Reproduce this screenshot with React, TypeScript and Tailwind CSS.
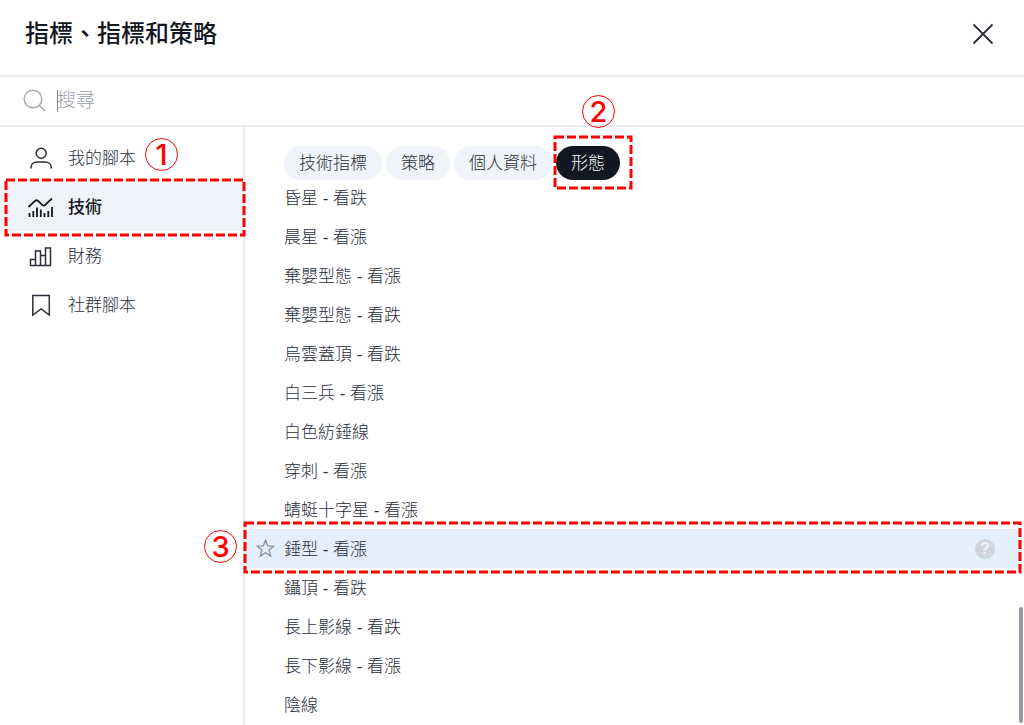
import { useState } from 'react';
import type { JSX } from 'react';
import { clsx } from 'clsx';

type CategoryId = 'mine' | 'technical' | 'financial' | 'community';

const categories: { id: CategoryId; label: string; icon: JSX.Element }[] = [
  { id: 'mine', label: '我的腳本', icon: <PersonIcon /> },
  { id: 'technical', label: '技術', icon: <TechnicalIcon /> },
  { id: 'financial', label: '財務', icon: <BarsIcon /> },
  { id: 'community', label: '社群腳本', icon: <BookmarkIcon /> }
];

const tabs = ['技術指標', '策略', '個人資料', '形態'];

const patterns = [
  '昏星 - 看跌',
  '晨星 - 看漲',
  '棄嬰型態 - 看漲',
  '棄嬰型態 - 看跌',
  '烏雲蓋頂 - 看跌',
  '白三兵 - 看漲',
  '白色紡錘線',
  '穿刺 - 看漲',
  '蜻蜓十字星 - 看漲',
  '錘型 - 看漲',
  '鑷頂 - 看跌',
  '長上影線 - 看跌',
  '長下影線 - 看漲',
  '陰線'
];

const highlightedPattern = '錘型 - 看漲';

export default function App() {
  const [category, setCategory] = useState<CategoryId>('technical');
  const [tab, setTab] = useState('形態');
  const [query, setQuery] = useState('');

  return (
    <div className="flex min-h-screen flex-col overflow-hidden bg-white font-['Liberation_Sans','Noto_Sans_CJK_TC',sans-serif] text-[17px] text-[#2a2e39]">
      <header className="flex h-[75px] items-center justify-between pr-7 pb-2 pl-[25px]">
        <h1 className="text-2xl font-medium text-[#131722]">指標、指標和策略</h1>
        <button type="button" aria-label="關閉" className="text-[#2a2e39]">
          <svg className="h-[26px] w-[26px]" viewBox="0 0 26 26" fill="none" stroke="currentColor" strokeWidth="1.8">
            <path d="M3.5 3.5l19 19M22.5 3.5l-19 19" />
          </svg>
        </button>
      </header>

      <label className="flex h-[52px] items-center gap-[10px] border-y-2 border-[#e9eaf1] px-[23px]">
        <svg className="h-6 w-6 shrink-0 text-[#a9abb5]" viewBox="0 0 24 24" fill="none" stroke="currentColor" strokeWidth="1.5">
          <circle cx="10" cy="10" r="8.8" />
          <path d="M16.3 16.3l6 6" />
        </svg>
        <span className="h-[22px] w-px bg-[#8d909b]" />
        <input
          type="text"
          aria-label="搜尋"
          placeholder="搜尋"
          value={query}
          onChange={(event) => setQuery(event.target.value)}
          className="-ml-[11px] min-w-0 flex-1 text-[19px] font-light outline-none placeholder:text-[#9a9daa]"
        />
      </label>

      <div className="flex flex-1">
        <nav className="w-[245px] shrink-0 border-r-2 border-[#e9eaf1] pt-1.5">
          {categories.map((item) => (
            <button
              key={item.id}
              type="button"
              onClick={() => setCategory(item.id)}
              className={clsx(
                'relative flex h-[49px] w-full items-center gap-[14px] pl-[27px]',
                item.id === category ? 'bg-[#f0f3fa] font-medium text-[#131722]' : 'font-light'
              )}
            >
              {item.icon}
              <span className="pt-[3px]">{item.label}</span>
              {item.id === 'mine' && <StepNumber value={1} className="top-[5px] left-[145px]" />}
              {item.id === 'technical' && <DashedFrame className="-top-[3px] -right-0.5 -bottom-[5px] left-[5px]" />}
            </button>
          ))}
        </nav>

        <main className="relative min-w-0 flex-1">
          <div className="flex gap-1 pt-[19px] pl-[39px]">
            {tabs.map((name) => (
              <button
                key={name}
                type="button"
                onClick={() => setTab(name)}
                className={clsx(
                  'relative h-[34px] rounded-full px-[15px] pt-0.5 font-light',
                  name === tab ? 'bg-[#131722] text-white' : 'bg-[#f0f3fa]'
                )}
              >
                {name}
                {name === '形態' && (
                  <>
                    <StepNumber value={2} className="-top-[51px] left-[26px]" />
                    <DashedFrame className="-top-[10px] -right-3 -bottom-[9px] -left-0.5" />
                  </>
                )}
              </button>
            ))}
          </div>

          <ul className="-mt-0.5 font-light">
            {patterns.map((name) => (
              <PatternRow key={name} name={name} highlighted={name === highlightedPattern} />
            ))}
          </ul>

          <div className="absolute right-px bottom-0.5 h-[116px] w-1 rounded-full bg-[#9598a1]" />
        </main>
      </div>
    </div>
  );
}

function PatternRow({ name, highlighted }: { name: string; highlighted: boolean }) {
  if (!highlighted) {
    return <li className="flex h-[39px] items-center pt-[3px] pl-[39px]">{name}</li>;
  }

  return (
    <li className="relative mr-[5px] flex h-[39px] items-center bg-[#e3effd] pr-6 pl-[11px]">
      <button type="button" aria-label="加入收藏" className="mr-[9px] text-[#8b8e99]">
        <svg className="h-[19px] w-[19px]" viewBox="0 0 19 19" fill="none" stroke="currentColor" strokeWidth="1.3">
          <path d="M9.5 1.2l2.2 5.6 6 .4-4.6 3.900 1.500 5.900-5.100-3.200-5.100 3.200 1.500-5.900L1.300 7.200l6-.4z" />
        </svg>
      </button>
      <span className="flex-1 pt-[3px]">{name}</span>
      <button
        type="button"
        aria-label="說明"
        className="h-5 w-5 rounded-full bg-[#d1d3de] text-base leading-5 font-bold text-[#edf3fc]"
      >
        ?
      </button>
      <StepNumber value={3} className="top-[1px] -left-[41px]" />
      <DashedFrame className="-top-[7px] -right-0.5 -bottom-[5px] -left-px" />
    </li>
  );
}

function StepNumber({ value, className }: { value: number; className: string }) {
  return (
    <span
      className={clsx(
        'absolute z-10 flex h-[33px] w-[33px] items-center justify-center rounded-full border border-[#ff0000] font-[Inter,sans-serif] text-[29px] leading-none font-medium text-[#ff0000]',
        className
      )}
    >
      {value}
    </span>
  );
}

function DashedFrame({ className }: { className: string }) {
  return (
    <span className={clsx('pointer-events-none absolute z-10 p-px', className)}>
      <svg className="h-full w-full overflow-visible" fill="none" stroke="#ff0000" strokeWidth="3" strokeDasharray="9 3">
        <rect width="100%" height="100%" />
      </svg>
    </span>
  );
}

function PersonIcon() {
  return (
    <svg className="h-[27px] w-[27px]" viewBox="0 0 27 27" fill="none" stroke="currentColor" strokeWidth="1.5">
      <circle cx="14.2" cy="9.2" r="5" />
      <path d="M4 24.500v-.8c0-3.400 2.700-5.700 6-5.700h8.300c3.300 0 6 2.300 6 5.700v.8" />
    </svg>
  );
}

function TechnicalIcon() {
  return (
    <svg className="h-[27px] w-[27px]" viewBox="0 0 27 27" fill="none" stroke="currentColor" strokeWidth="1.8">
      <path d="M1.500 14L8.300 7.700c.8-.7 1.700-.7 2.500 0l4.700 4.400c.8.700 1.700.7 2.400 0L25 5.500" />
      <path d="M2.500 20v4M6.300 18v6M10 14.500V24M13.800 16.500V24M17.500 20v4M21.300 18v6M25 14v10" />
    </svg>
  );
}

function BarsIcon() {
  return (
    <svg className="h-[27px] w-[27px]" viewBox="0 0 27 27" fill="none" stroke="currentColor" strokeWidth="1.5">
      <path d="M3.500 23.500v-6h5v6M8.500 23.500v-14.500h5v14.500M13.500 13.500h5M18.500 23.500v-17.500h5v17.500zM2.800 23.500h20.700" />
    </svg>
  );
}

function BookmarkIcon() {
  return (
    <svg className="h-[27px] w-[27px]" viewBox="0 0 27 27" fill="none" stroke="currentColor" strokeWidth="1.5">
      <path d="M5.800 4.500h16.500v19.500l-8.200-6-8.300 6z" />
    </svg>
  );
}
